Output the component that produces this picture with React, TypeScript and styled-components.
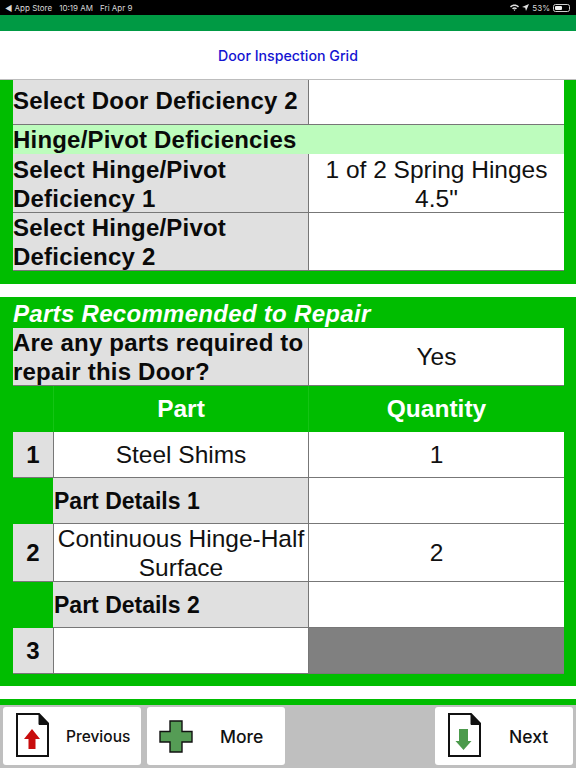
import styled, { createGlobalStyle } from 'styled-components';

const GlobalStyle = createGlobalStyle`
  html, body {
    margin: 0;
    padding: 0;
    background: #ffffff;
  }
  * {
    box-sizing: border-box;
  }
`;

const Screen = styled.div`
  width: 576px;
  height: 768px;
  overflow: hidden;
  display: flex;
  flex-direction: column;
  font-family: 'Liberation Sans', Arial, sans-serif;
`;

const StatusBar = styled.div`
  height: 15px;
  background: #000000;
  color: #d8d8d8;
  display: flex;
  align-items: center;
  justify-content: space-between;
  padding: 0 6px 0 5px;
  font-family: Inter, 'Liberation Sans', sans-serif;
  font-size: 8px;
`;

const StatusGroup = styled.div<{ $gap: number }>`
  display: flex;
  align-items: center;
  gap: ${(p) => p.$gap}px;
`;

const Battery = styled.div`
  width: 17px;
  height: 8px;
  border: 1px solid #cfcfcf;
  border-radius: 2.5px;
  padding: 1px;
  display: flex;
`;

const BatteryFill = styled.div`
  width: 53%;
  background: #f0f0f0;
  border-radius: 1px;
`;

const GreenStrip = styled.div`
  height: 16px;
  background: #009a44;
`;

const NavBar = styled.div`
  height: 49px;
  background: #ffffff;
  border-bottom: 1px solid #bdbdbd;
  display: flex;
  align-items: center;
  justify-content: center;
  color: #1414d2;
  font-family: Inter, 'Liberation Sans', sans-serif;
  font-size: 14.2px;
  font-weight: 500;
`;

const Section = styled.div<{ $bottom: number }>`
  background: #00bd00;
  padding: 0 12px ${(p) => p.$bottom}px 13px;
`;

const Gap = styled.div`
  height: 13px;
  background: #ffffff;
`;

const Row = styled.div<{ $h: number; $cols?: string }>`
  height: ${(p) => p.$h}px;
  display: grid;
  grid-template-columns: ${(p) => p.$cols ?? '295px 256px'};
  grid-template-rows: minmax(0, 1fr);
`;

const Label = styled.div<{ $lift?: number; $drop?: number }>`
  background: #e0e0e0;
  border-bottom: 1px solid #777777;
  padding-top: ${(p) => p.$drop ?? 0}px;
  padding-bottom: ${(p) => p.$lift ?? 0}px;
  color: #0a0a0a;
  font-size: 24px;
  font-weight: 700;
  line-height: 29px;
  letter-spacing: 0.2px;
  display: flex;
  align-items: center;
`;

const Cell = styled.div<{ $dark?: boolean; $drop?: number }>`
  background: ${(p) => (p.$dark ? '#808080' : '#ffffff')};
  border-left: 1px solid #777777;
  border-bottom: 1px solid #777777;
  padding-top: ${(p) => p.$drop ?? 0}px;
  color: #111111;
  font-size: 24.5px;
  line-height: 29px;
  text-align: center;
  display: flex;
  align-items: center;
  justify-content: center;
`;

const SubHeader = styled.div`
  height: 29px;
  background: #bdfcbd;
  color: #0a0a0a;
  font-size: 24px;
  font-weight: 700;
  line-height: 29px;
  letter-spacing: 0.2px;
`;

const SectionTitle = styled.div`
  height: 31px;
  color: #ffffff;
  font-size: 24px;
  font-weight: 700;
  font-style: italic;
  line-height: 33px;
  letter-spacing: 0.3px;
`;

const HeadCell = styled.div`
  border-left: 1px solid #14c414;
  color: #ffffff;
  font-size: 24.5px;
  font-weight: 700;
  display: flex;
  align-items: center;
  justify-content: center;
`;

const NumCell = styled(Label)`
  justify-content: center;
  letter-spacing: 0;
`;

const DetailLabel = styled(Label)`
  font-size: 23px;
  letter-spacing: 0;
  padding-left: 1px;
`;

const Spacer = styled.div``;

const Footer = styled.div`
  margin-top: 13px;
  border-top: 6px solid #00bd00;
  flex: 1;
  background: #bfbfbf;
  display: flex;
  gap: 6px;
  padding: 2px 3px 3px 3px;
`;

const FootButton = styled.div<{ $gap: number; $left: number }>`
  width: 138px;
  height: 58px;
  background: #ffffff;
  border-radius: 3px;
  display: flex;
  align-items: center;
  gap: ${(p) => p.$gap}px;
  padding-left: ${(p) => p.$left}px;
  color: #111111;
  font-family: Inter, 'Liberation Sans', sans-serif;
  font-weight: 500;
`;

const ButtonText = styled.span<{ $size: number }>`
  font-size: ${(p) => p.$size}px;
`;

const Grow = styled.div`
  flex: 1;
`;

const PageIcon = ({ down }: { down?: boolean }) => (
  <svg width="34" height="46" viewBox="0 0 34 46">
    <path d="M2 1H24L33 10.5V43H2Z" fill="#fff" stroke="#111" strokeWidth="2" />
    <path d="M24 1L33 10.5V11.5H24Z" fill="#111" stroke="#111" strokeWidth="1" />
    {down ? (
      <path d="M12 16H21V28H24.5L16.5 37L8.5 28H12Z" fill="#4c9a4c" />
    ) : (
      <path d="M17 16L25 26H20.5V36H13.5V26H9Z" fill="#c80d0d" />
    )}
  </svg>
);

const PlusIcon = () => (
  <svg width="34" height="33" viewBox="0 0 34 33">
    <path
      d="M11 1H23V11.5H33V22H23V32H11V22H1V11.5H11Z"
      fill="#559c55"
      stroke="#111"
      strokeWidth="1.4"
    />
  </svg>
);

const NUM_COLS = '40px 255px 256px';

export default function App() {
  return (
    <Screen>
      <GlobalStyle />
      <StatusBar>
        <StatusGroup $gap={7}>
          <span>◀ App Store</span>
          <span>10:19 AM</span>
          <span>Fri Apr 9</span>
        </StatusGroup>
        <StatusGroup $gap={3}>
          <svg width="9" height="7" viewBox="0 0 9 7">
            <path d="M0 2.4C2.6 0 6.4 0 9 2.4L8 3.4C5.9 1.6 3.1 1.6 1 3.4ZM2 4.2C3.5 3 5.5 3 7 4.2L6 5.2C5 4.5 4 4.5 3 5.2ZM3.6 5.8C4.2 5.3 4.8 5.3 5.4 5.8L4.5 7Z" fill="#e0e0e0" />
          </svg>
          <svg width="7" height="7" viewBox="0 0 7 7">
            <path d="M7 0L4 7L3.2 3.8L0 3Z" fill="#e0e0e0" />
          </svg>
          <span>53%</span>
          <Battery>
            <BatteryFill />
          </Battery>
        </StatusGroup>
      </StatusBar>
      <GreenStrip />
      <NavBar>Door Inspection Grid</NavBar>

      <Section $bottom={13}>
        <Row $h={45}>
          <Label $lift={4}>Select Door Deficiency 2</Label>
          <Cell />
        </Row>
        <SubHeader>Hinge/Pivot Deficiencies</SubHeader>
        <Row $h={59}>
          <Label $drop={2}>Select Hinge/Pivot Deficiency 1</Label>
          <Cell $drop={2}>1 of 2 Spring Hinges 4.5"</Cell>
        </Row>
        <Row $h={58}>
          <Label $drop={1}>Select Hinge/Pivot Deficiency 2</Label>
          <Cell />
        </Row>
      </Section>
      <Gap />

      <Section $bottom={12}>
        <SectionTitle>Parts Recommended to Repair</SectionTitle>
        <Row $h={58}>
          <Label>Are any parts required to repair this Door?</Label>
          <Cell>Yes</Cell>
        </Row>
        <Row $h={46} $cols={NUM_COLS}>
          <Spacer />
          <HeadCell>Part</HeadCell>
          <HeadCell>Quantity</HeadCell>
        </Row>
        <Row $h={46} $cols={NUM_COLS}>
          <NumCell>1</NumCell>
          <Cell>Steel Shims</Cell>
          <Cell>1</Cell>
        </Row>
        <Row $h={46} $cols={NUM_COLS}>
          <Spacer />
          <DetailLabel $drop={2}>Part Details 1</DetailLabel>
          <Cell />
        </Row>
        <Row $h={58} $cols={NUM_COLS}>
          <NumCell>2</NumCell>
          <Cell>Continuous Hinge-Half Surface</Cell>
          <Cell>2</Cell>
        </Row>
        <Row $h={46} $cols={NUM_COLS}>
          <Spacer />
          <DetailLabel $drop={2}>Part Details 2</DetailLabel>
          <Cell />
        </Row>
        <Row $h={46} $cols={NUM_COLS}>
          <NumCell>3</NumCell>
          <Cell />
          <Cell $dark />
        </Row>
      </Section>

      <Footer>
        <FootButton $gap={17} $left={12}>
          <PageIcon />
          <ButtonText $size={15.5}>Previous</ButtonText>
        </FootButton>
        <FootButton $gap={27} $left={12}>
          <PlusIcon />
          <ButtonText $size={17.5}>More</ButtonText>
        </FootButton>
        <Grow />
        <FootButton $gap={28} $left={12}>
          <PageIcon down />
          <ButtonText $size={17.5}>Next</ButtonText>
        </FootButton>
      </Footer>
    </Screen>
  );
}
